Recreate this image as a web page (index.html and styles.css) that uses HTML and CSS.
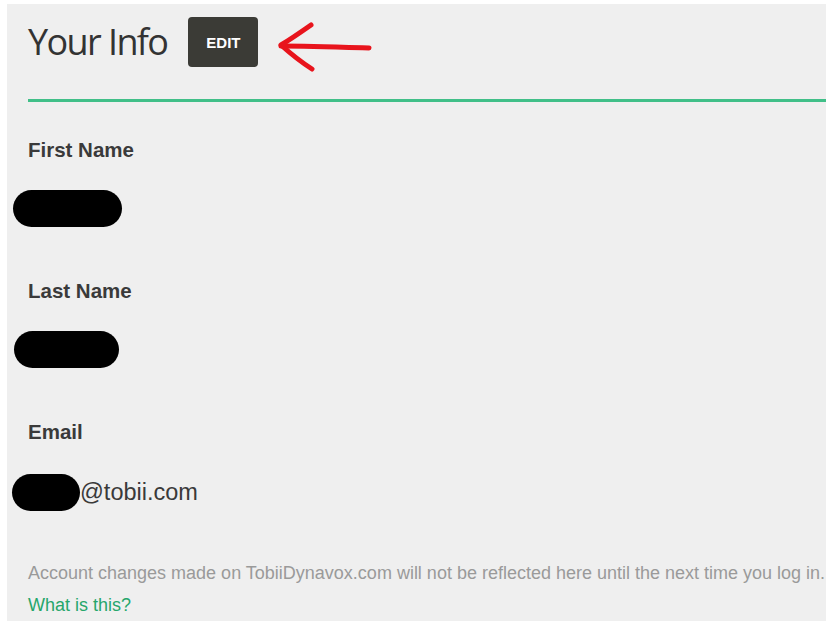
FILE: index.html
```html
<!DOCTYPE html>
<html lang="en">
<head>
<meta charset="utf-8">
<title>Your Info</title>
<link rel="stylesheet" href="styles.css">
</head>
<body>
<main class="panel">
  <header class="head">
    <h1 class="title">Your Info</h1>
    <button class="edit" type="button">EDIT</button>
    <svg class="arrow" width="100" height="54" viewBox="0 0 100 54" aria-hidden="true">
      <path d="M4 24 C30 24 60 25 92 26" fill="none" stroke="#e8141c" stroke-width="5" stroke-linecap="round"/>
      <path d="M34 3 C24 10 14 17 4 23 C14 32 24 40 35 47" fill="none" stroke="#e8141c" stroke-width="5" stroke-linecap="round" stroke-linejoin="round"/>
    </svg>
  </header>

  <section class="field">
    <h2 class="label">First Name</h2>
    <div class="value"><span class="redact redact-first"></span></div>
  </section>

  <section class="field">
    <h2 class="label">Last Name</h2>
    <div class="value"><span class="redact redact-last"></span></div>
  </section>

  <section class="field">
    <h2 class="label">Email</h2>
    <div class="value value-email"><span class="redact redact-email"></span>@tobii.com</div>
  </section>

  <footer class="note">
    <p class="note-text">Account changes made on TobiiDynavox.com will not be reflected here until the next time you log in.</p>
    <a class="note-link" href="#">What is this?</a>
  </footer>
</main>
</body>
</html>
```

FILE: styles.css
```css
html, body {
  margin: 0;
  padding: 0;
  background: #ffffff;
}

body {
  padding: 4px 0 6px 7px;
  font-family: "Liberation Sans", Arial, sans-serif;
  color: #333333;
}

.panel {
  background: #efefef;
  height: 617px;
  padding: 0 0 0 21px;
  box-sizing: border-box;
  overflow: hidden;
}

.head {
  position: relative;
  display: flex;
  align-items: center;
  height: 98px;
  border-bottom: 3px solid #40bf88;
  box-sizing: border-box;
}

.title {
  margin: -20px 0 0 0;
  font-family: "Open Sans", sans-serif;
  font-weight: 400;
  font-size: 36px;
  line-height: 1;
  color: #333333;
  letter-spacing: -1.6px;
}

.edit {
  margin: -19px 0 0 21px;
  width: 70px;
  height: 50px;
  border: none;
  border-radius: 4px;
  background: #3b3b36;
  color: #ffffff;
  font-family: "Liberation Sans", Arial, sans-serif;
  font-weight: 700;
  font-size: 15px;
  letter-spacing: 0;
  padding: 0;
}

.arrow {
  position: absolute;
  left: 249px;
  top: 18px;
}

.field {
  height: 141px;
}

.field:first-of-type {
  margin-top: 36px;
}

.label {
  margin: 0;
  font-size: 20.5px;
  font-weight: 700;
  line-height: 24px;
  color: #3a3a3a;
}

.value {
  margin-top: 27px;
  display: flex;
  align-items: center;
  height: 38px;
  font-size: 23.5px;
  color: #3a3a3a;
}

.value-email {
  margin-top: 29px;
}

.redact {
  display: inline-block;
  height: 37px;
  background: #000000;
  border-radius: 19px;
}

.redact-first {
  width: 109px;
  margin-left: -15px;
}

.redact-last {
  width: 105px;
  margin-left: -14px;
}

.redact-email {
  width: 68px;
  margin-left: -16px;
}

.note {
  margin-top: -3px;
}

.note-text {
  margin: 0;
  font-size: 18px;
  line-height: 31px;
  color: #9a9a9a;
  white-space: nowrap;
}

.note-link {
  display: block;
  margin-top: 5px;
  font-size: 18px;
  line-height: 22px;
  color: #26a66b;
  text-decoration: none;
}
```
